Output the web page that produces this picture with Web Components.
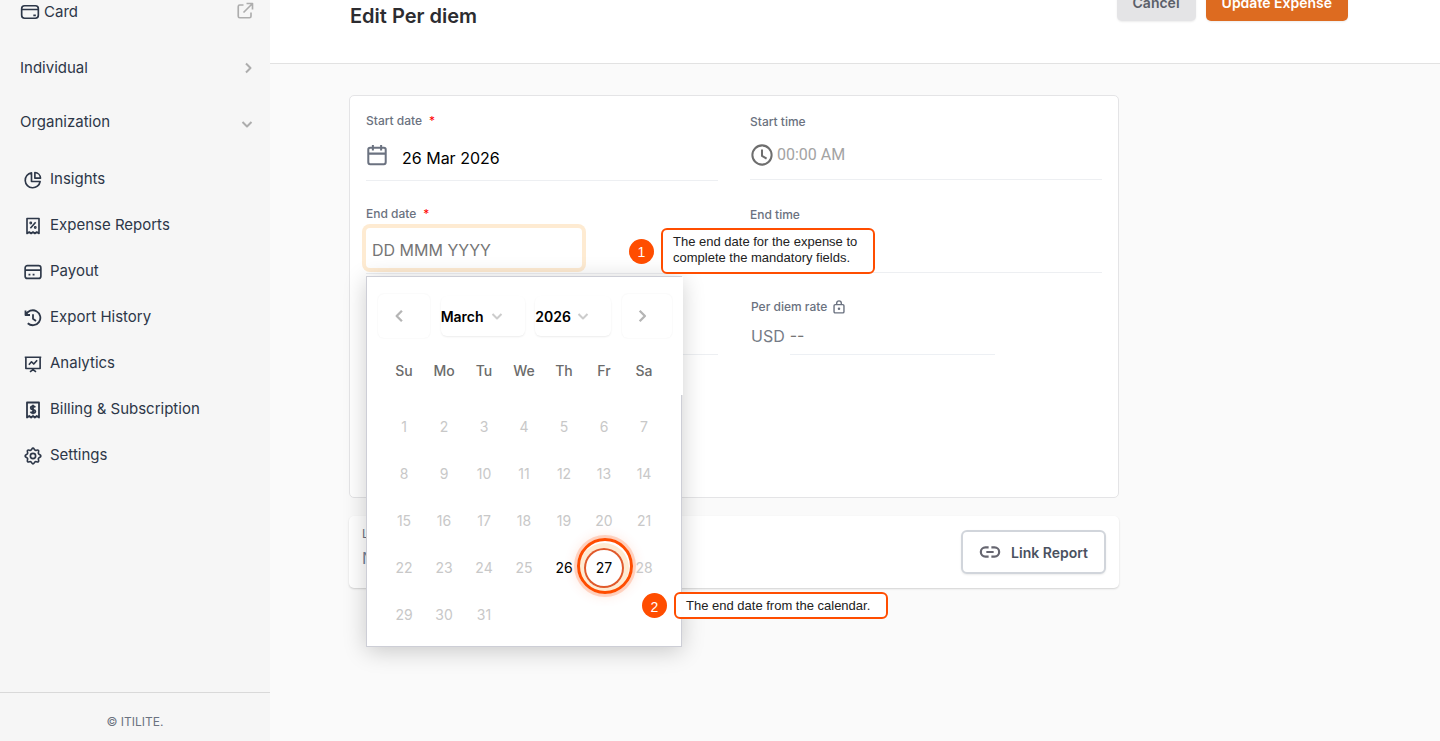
<!DOCTYPE html>
<html lang="en">
<head>
<meta charset="utf-8">
<title>Edit Per diem</title>
<style>
	body {
		margin: 0;
		height: 100vh;
		overflow: hidden;
		font-family: Inter, "Liberation Sans", sans-serif;
		background: #fafafa;
	}
</style>
</head>
<body>
<expense-app></expense-app>

<script>
"use strict"

const ICONS = {
	card: `<rect x="2" y="4.500" width="20" height="15" rx="3.500"/><path d="M2 9h20M16 16h3"/>`,
	external: `<path d="M10 4H5a2 2 0 0 0-2 2v13a2 2 0 0 0 2 2h13a2 2 0 0 0 2-2v-5M14 2h8v8M22 2 10 14"/>`,
	right: `<path d="m8 3 9 9-9 9"/>`,
	left: `<path d="m17 3-9 9 9 9"/>`,
	down: `<path d="m3 8 9 9 9-9"/>`,
	pie: `<path d="M10 2.500A10 10 0 1 0 21.500 14H10zM14.500 2v7.500H22A8 8 0 0 0 14.500 2z"/>`,
	percent: `<path d="M4 2h16v20l-3-2-2.500 2-2.500-2-2.500 2L7 20l-3 2zM8.500 15l7-8"/><circle cx="9" cy="8" r=".8"/><circle cx="15" cy="14" r=".8"/>`,
	payout: `<rect x="1.500" y="3.500" width="21" height="17" rx="3"/><path d="M1.500 9.500h21M6 15.500h2.500M11.500 15.500H14"/>`,
	history: `<path d="M2 2v6h6M2.500 8A10 10 0 1 1 5 19M12 7v6l4 3"/>`,
	board: `<path d="M1 3h22M2.500 3v15h19V3M12 18v2M8 22.500l4-3 4 3M6.500 13l3.500-4 3 3 4.500-5"/>`,
	dollar: `<path d="M4 2h16v20l-3-2-2.500 2-2.500-2-2.500 2L7 20l-3 2zM15 8.500c-.5-1-1.500-1.500-3-1.500s-3 .8-3 2.200c0 3.300 6.200 1.300 6.200 4.600 0 1.400-1.500 2.200-3.200 2.200s-2.800-.6-3.300-1.800M12 5v12.500"/>`,
	gear: `<circle cx="12" cy="12" r="3.500"/><path d="M12 1.500c1.500 0 1.600 2.400 3 2.900s3-1.200 4.200 0-.5 2.800 0 4.200 3.300 1.500 3.300 3.400-2.800 2-3.300 3.400 1.200 3 0 4.200-2.800-.5-4.200 0-1.500 2.900-3 2.900-1.600-2.400-3-2.900-3 1.200-4.200 0 .5-2.800 0-4.200-3.300-1.500-3.300-3.400 2.800-2 3.300-3.400-1.200-3 0-4.200 2.800.5 4.200 0 1.500-2.900 3-2.900z"/>`,
	calendar: `<rect x="2.500" y="4" width="19" height="18" rx="2"/><path d="M2.500 10.500h19M7.500 1v6M16.500 1v6"/>`,
	clock: `<circle cx="12" cy="12" r="10.500"/><path d="M12 6v7l5 3"/>`,
	lock: `<rect x="3.500" y="8" width="17" height="14" rx="2"/><path d="M8 8V5.500a4 4 0 0 1 8 0V8"/><circle cx="12" cy="15" r="1"/>`,
	link: `<path d="M10.500 7H7a5 5 0 0 0 0 10h3.500M13.500 7H17a5 5 0 0 1 0 10h-3.500M8 12h8"/>`
}

function define(name, render) {
	customElements.define(name, class extends HTMLElement {
		connectedCallback() {
			if (this.shadowRoot) return
			this.attachShadow({ mode: "open" }).innerHTML = render(this)
		}
	})
}

// size and stroke come in as attributes, colour is inherited
define("ui-icon", el => `
	<style>
		:host { display: block; flex: none; line-height: 0; }
	</style>
	<svg width="${el.getAttribute("size") || 18}" height="${el.getAttribute("size") || 18}" viewBox="0 0 24 24"
		fill="none" stroke="currentColor" stroke-width="${el.getAttribute("weight") || 2.2}"
		stroke-linejoin="round" aria-hidden="true">${ICONS[el.getAttribute("name")]}</svg>
`)

define("nav-item", () => `
	<style>
		:host { display: block; }
		a {
			display: flex;
			align-items: center;
			gap: 8px;
			height: 46px;
			padding-left: 24px;
			font-size: 15px;
			color: #2d3748;
			text-decoration: none;
		}
		::slotted(ui-icon) { padding-top: 4px; }
	</style>
	<a href="#"><slot name="icon"></slot><slot></slot></a>
`)

define("nav-group", () => `
	<style>
		:host { display: block; }
		a {
			display: flex;
			align-items: center;
			justify-content: space-between;
			height: 54px;
			padding: 0 16px 0 20px;
			font-size: 15px;
			color: #2d3748;
			text-decoration: none;
		}
		span { display: flex; align-items: center; gap: 4px; }
		::slotted([slot=end]) { color: #adadad; }
	</style>
	<a href="#"><span><slot></slot></span><slot name="end"></slot></a>
`)

define("side-bar", () => `
	<style>
		:host {
			display: flex;
			flex-direction: column;
			justify-content: space-between;
			background: #f6f6f6;
		}
		nav { margin-top: -16px; }
		.first { margin-bottom: 2px; }
		.items { padding-top: 7px; }
		.card { padding-top: 2px; }
		.chevron { padding-top: 1px; }
		.down { padding: 6px 1px 0 0; }
		footer {
			border-top: 1px solid #d9d9d9;
			font-size: 12px;
			line-height: 16px;
			padding: 21px 0 11px;
			text-align: center;
			color: #6b7280;
		}
	</style>
	<nav>
		<nav-group class="first"><ui-icon class="card" name="card" size="20" weight="2"></ui-icon>Card<ui-icon slot="end" name="external" size="18"></ui-icon></nav-group>
		<nav-group>Individual<ui-icon class="chevron" slot="end" name="right" size="12" weight="4"></ui-icon></nav-group>
		<nav-group>Organization<ui-icon class="down" slot="end" name="down" size="12" weight="4"></ui-icon></nav-group>
		<div class="items">
			<nav-item><ui-icon slot="icon" name="pie"></ui-icon>Insights</nav-item>
			<nav-item><ui-icon slot="icon" name="percent"></ui-icon>Expense Reports</nav-item>
			<nav-item><ui-icon slot="icon" name="payout"></ui-icon>Payout</nav-item>
			<nav-item><ui-icon slot="icon" name="history" weight="2.4"></ui-icon>Export History</nav-item>
			<nav-item><ui-icon slot="icon" name="board"></ui-icon>Analytics</nav-item>
			<nav-item><ui-icon slot="icon" name="dollar" weight="2.4"></ui-icon>Billing &amp; Subscription</nav-item>
			<nav-item><ui-icon slot="icon" name="gear"></ui-icon>Settings</nav-item>
		</div>
	</nav>
	<footer>© ITILITE.</footer>
`)

define("page-header", () => `
	<style>
		:host {
			display: flex;
			align-items: flex-start;
			margin-top: -15px;
			padding: 0 92px 33px 80px;
			gap: 10px;
			background: white;
			border-bottom: 1px solid #e2e2e2;
		}
		h1 {
			flex: 1;
			margin: 17px 0 0;
			font-size: 20px;
			line-height: 28px;
			font-weight: 600;
			color: #2c2c30;
		}
		button {
			height: 36px;
			padding: 0 16px 1px;
			border: 0;
			border-radius: 5px;
			font: 600 14px Inter, sans-serif;
			color: #5b5f69;
			background: #e4e4e6;
			box-shadow: 0 1px 2px rgba(0,0,0,.08);
		}
		.primary { color: white; background: #dd6b20; }
	</style>
	<h1>Edit Per diem</h1>
	<button type="button">Cancel</button>
	<button type="button" class="primary">Update Expense</button>
`)

define("form-field", el => {
	const type = el.getAttribute("type")
	const icon = { date: "calendar", time: "clock" }[type]
	return `
	<style>
		:host {
			display: flex;
			flex-direction: column;
			box-sizing: border-box;
			height: 69px;
			border-bottom: 1px solid #edeff2;
		}
		:host([type=time]) { height: 68px; }
		:host([type=rate]) { height: 57px; border: 0; padding-left: 1px; }
		:host([type=empty]) { height: 57px; }
		label {
			display: flex;
			align-items: center;
			gap: 7px;
			font-size: 12px;
			line-height: 18px;
			font-weight: 500;
			color: #6b7280;
		}
		:host([type=time]) label { line-height: 20px; }
		:host([type=rate]) label { gap: 5px; }
		b { color: #f00; font-weight: 400; }
		.row { flex: 1; display: flex; align-items: center; color: #6b7280; }
		input {
			flex: 1;
			min-width: 0;
			box-sizing: border-box;
			height: 40px;
			padding: 0;
			border: 0;
			outline: 0;
			background: none;
			font: 16px Inter, sans-serif;
			color: black;
		}
		input::placeholder { color: #757575; opacity: 1; }
		:host([type=date]) .row { align-items: flex-start; gap: 14px; padding-top: 8px; }
		:host([type=date]) ui-icon { padding-top: 6px; }
		:host([type=time]) .row { gap: 4px; color: #6e6e6e; padding: 0 0 2px 1px; }
		:host([type=time]) input { font-family: Roboto, sans-serif; }
		:host([type=time]) input::placeholder { color: #a3a3a3; }
		:host([active]) .row { align-items: flex-start; padding-top: 5px; }
		:host([active]) input {
			flex: none;
			width: 216px;
			padding: 3px 6px 0;
			border-radius: 4px;
			box-shadow: 0 0 0 4px #feebd2;
		}
		:host([type=rate]) .row { gap: 5px; color: #757b86; }
		:host([type=rate]) input {
			flex: none;
			width: 205px;
			height: 38px;
			border-bottom: 1px solid #edf0f4;
		}
	</style>
	${type === "empty" ? "" : `
	<label for="control"><slot></slot>${el.hasAttribute("required") ? "<b>*</b>" : ""}${type === "rate" ? `<ui-icon name="lock" size="14" weight="2.4"></ui-icon>` : ""}</label>
	<div class="row">
		${icon ? `<ui-icon name="${icon}" size="22"></ui-icon>` : ""}
		${type === "rate" ? "<span>USD</span>" : ""}
		<input id="control" type="text" value="${el.getAttribute("value") || ""}" placeholder="${el.getAttribute("placeholder") || ""}">
	</div>`}
`})

define("step-callout", el => `
	<style>
		:host {
			position: absolute;
			z-index: 3;
			display: flex;
			align-items: center;
			gap: 7px;
			font: 13px "Liberation Sans", sans-serif;
		}
		span {
			box-sizing: border-box;
			display: grid;
			place-items: center;
			width: 25px;
			height: 25px;
			padding-top: 2px;
			border-radius: 50%;
			background: #ff4d00;
			color: white;
			font-size: 14px;
		}
		p {
			box-sizing: border-box;
			width: 214px;
			margin: 0;
			padding: 4px 10px 6px;
			border: 2px solid #ff4d00;
			border-radius: 6px;
			background: rgba(255,255,255,.97);
			color: #222;
			line-height: 16px;
		}
		:host([compact]) p { padding: 4px 10px 3px; }
	</style>
	<span>${el.getAttribute("step")}</span>
	<p><slot></slot></p>
`)

define("date-picker", () => {
	const enabled = [26, 27]
	let rows = ""
	for (let first = 1; first <= 31; first += 7) {
		rows += "<tr>"
		for (let day = first; day < first + 7; day++) {
			if (day > 31) rows += "<td></td>"
			else rows += `<td><button type="button" ${enabled.includes(day) ? "" : "disabled"} ${day === 27 ? `class="target"` : ""}>${day}</button></td>`
		}
		rows += "</tr>"
	}
	return `
	<style>
		:host {
			position: absolute;
			z-index: 2;
			box-sizing: border-box;
			width: 316px;
			padding: 17px 11px 8px;
			background: white;
			border: 1px solid #cdced6;
			box-shadow: 0 4px 22px rgba(0,0,0,.2);
		}
		/* white strip that hides the right border beside the header */
		:host::after {
			content: "";
			position: absolute;
			top: 0;
			right: -2px;
			width: 3px;
			height: 118px;
			background: white;
		}
		button, select {
			border: 0;
			padding: 0;
			background: none;
			color: inherit;
			font: inherit;
		}
		header {
			display: flex;
			align-items: center;
			justify-content: space-between;
			height: 44px;
			margin-right: -2px;
		}
		.arrow, .select { border-radius: 6px; box-shadow: 0 1px 2px rgba(0,0,0,.08); }
		.arrow {
			display: grid;
			place-items: center;
			width: 50px;
			height: 44px;
			color: #b5b5b5;
			box-shadow: 0 0 2px rgba(0,0,0,.07);
		}
		.prev { width: 52px; padding-right: 10px; }
		.next { padding-right: 10px; }
		.select {
			display: grid;
			align-items: center;
			width: 84px;
			height: 40px;
			font-size: 14px;
			font-weight: 600;
		}
		.year { width: 76px; }
		.select > * { grid-area: 1 / 1; }
		select { appearance: none; height: 38px; color: black; outline: 0; }
		.select ui-icon {
			justify-self: end;
			margin-right: 22px;
			color: #ccc;
			pointer-events: none;
		}
		table {
			border-collapse: collapse;
			margin-left: 6px;
			font-size: 14px;
			text-align: center;
		}
		th { width: 40px; height: 65px; padding: 0; font-weight: 500; color: #6b6b6b; }
		td { width: 40px; height: 47px; padding: 0; }
		td button {
			position: relative;
			display: block;
			width: 40px;
			height: 40px;
			margin: auto;
			border-radius: 50%;
			color: black;
		}
		td button:disabled { color: #c8c8c8; }
		.target {
			box-shadow: inset 0 0 0 2px #e05a2b, 0 0 0 5px #feebd2;
		}
		.target::after {
			content: "";
			position: absolute;
			inset: -10px -9px -6px -7px;
			box-sizing: border-box;
			border: 3px solid #ff4d00;
			border-radius: 50%;
			box-shadow: 0 0 0 3px rgba(255,77,0,.2), 0 0 14px rgba(255,77,0,.2);
		}
	</style>
	<header>
		<button type="button" class="arrow prev" aria-label="Previous month"><ui-icon name="left" size="14" weight="4"></ui-icon></button>
		<div class="select"><select aria-label="Month"><option>March</option></select><ui-icon name="down" size="12" weight="4"></ui-icon></div>
		<div class="select year"><select aria-label="Year"><option>2026</option></select><ui-icon name="down" size="12" weight="4"></ui-icon></div>
		<button type="button" class="arrow next" aria-label="Next month"><ui-icon name="right" size="14" weight="4"></ui-icon></button>
	</header>
	<table>
		<thead><tr>${["Su", "Mo", "Tu", "We", "Th", "Fr", "Sa"].map(d => `<th>${d}</th>`).join("")}</tr></thead>
		<tbody>${rows}</tbody>
	</table>
	<slot></slot>
`})

define("per-diem-form", () => `
	<style>
		:host {
			position: relative;
			display: grid;
			grid-template-columns: 1fr 1fr;
			align-items: start;
			gap: 24px 32px;
			padding: 16px 16px 142px;
			background: white;
			border: 1px solid #e4e4e6;
			border-radius: 5px;
		}
		date-picker { left: 16px; top: 180px; }
		.one { left: 279px; top: 132px; }
		.two { left: 275px; top: 315px; }
	</style>
	<form-field type="date" value="26 Mar 2026" required>Start date</form-field>
	<form-field type="time" placeholder="00:00 AM">Start time</form-field>
	<form-field active required placeholder="DD MMM YYYY">End date</form-field>
	<form-field type="time" placeholder="00:00 AM">End time</form-field>
	<form-field type="empty"></form-field>
	<form-field type="rate" placeholder="--">Per diem rate</form-field>
	<date-picker>
		<step-callout class="two" step="2" compact>The end date from the calendar.</step-callout>
	</date-picker>
	<step-callout class="one" step="1">The end date for the expense to complete the mandatory fields.</step-callout>
`)

define("report-card", () => `
	<style>
		:host {
			display: flex;
			align-items: flex-end;
			justify-content: space-between;
			padding: 10px 13px 14px;
			background: white;
			border-radius: 5px;
			box-shadow: 0 1px 2px rgba(0,0,0,.16);
		}
		dl { margin: 0; padding-bottom: 4px; color: #6b7280; }
		dt { font-size: 12px; line-height: 16px; }
		dd { margin: 4px 0 0; font-size: 16px; line-height: 24px; color: #718096; }
		button {
			display: flex;
			align-items: center;
			gap: 10px;
			height: 44px;
			padding: 0 16px;
			border: 2px solid #d1d5db;
			border-radius: 6px;
			background: white;
			color: #4a5160;
			font: 600 14px Inter, sans-serif;
			box-shadow: 0 1px 2px rgba(0,0,0,.08);
		}
		ui-icon { color: #666670; }
	</style>
	<dl><dt>Link</dt><dd>NA</dd></dl>
	<button type="button"><ui-icon name="link" size="22" weight="2.4"></ui-icon>Link Report</button>
`)

define("expense-app", () => `
	<style>
		:host {
			display: grid;
			grid-template-columns: 270px 1fr;
			height: 100%;
		}
		.content {
			display: flex;
			flex-direction: column;
			gap: 18px;
			max-width: 770px;
			padding: 31px 79px;
		}
	</style>
	<side-bar></side-bar>
	<main>
		<page-header></page-header>
		<div class="content">
			<per-diem-form></per-diem-form>
			<report-card></report-card>
		</div>
	</main>
`)
</script>
</body>
</html>
